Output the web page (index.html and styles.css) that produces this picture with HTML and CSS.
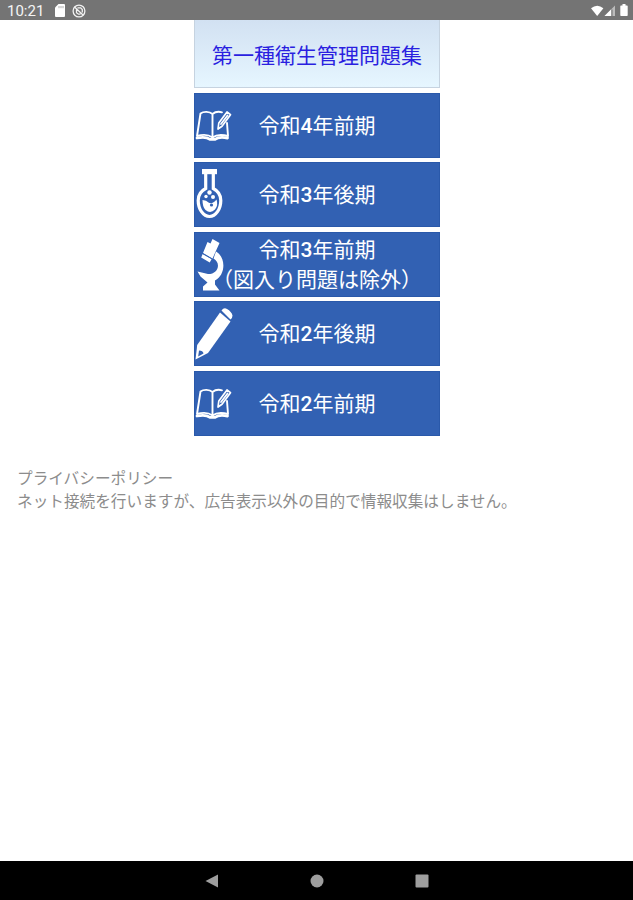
FILE: index.html
```html
<!DOCTYPE html>
<html lang="ja">
<head>
    <meta charset="UTF-8">
    <title>第一種衛生管理問題集</title>
    <link rel="stylesheet" href="styles.css">
</head>
<body>
<svg class="defs" width="0" height="0">
    <symbol id="book" viewBox="0 0 38 60">
        <g fill="none" stroke="#fff" stroke-linejoin="round" stroke-linecap="round">
            <path stroke-width="1.900" d="M17.500 19C14.500 16.200 8.500 16.200 5.500 18.500L2 41c5-1.500 11.500-1.500 15.500 1.500 4-3 10-3 15.500-1.500L32 28M17.500 19V42M17.500 19c3-2.500 6-2.700 9.500-1.700"/>
            <path stroke-width="2.800" d="M2 43c5-1 10-1 13 1.400h5c3-2.400 7-2.400 12.500-1.400"/>
            <path stroke-width="1.700" d="M23 34l.8-6L32 17l3.500 2.700-8.500 11.500zM26 29l6.500-8.500"/>
        </g>
    </symbol>
</svg>
<div class="status">
    <span class="time">10:21</span>
    <svg class="sd" width="10" height="13" viewBox="0 0 10 13"><path fill="#fff" d="M3.500 0H9q1 0 1 1v11q0 1-1 1H1q-1 0-1-1V3.500z"/><path stroke="#999" stroke-width=".8" d="M4 2v2.200M6 2v2.200M8 2v2.200"/></svg>
    <svg class="sync" width="14" height="14" viewBox="0 0 14 14"><g fill="none" stroke="#f2f2f2" stroke-width="1.300"><circle cx="7" cy="7" r="5.900"/><path d="M2.500 3l8.800 8.300M4.500 5.500v3.200l2 1.500h2M5.500 3.800h3.200l1.600 1.700v3"/></g></svg>
    <svg class="signals" width="38" height="14" viewBox="0 0 38 14">
        <path fill="#fff" d="M0 4.200Q6.200-.8 12.400 4.200L6.200 12z"/>
        <path fill="#bbb" d="M13.500 12L24 1.500V12z"/><path fill="#fff" d="M13.500 12L20 5.500V12z"/><path stroke="#747474" d="M21 5.500V12"/>
        <path fill="#fff" d="M31.500 0h3v1.500H36q.7 0 .7.700v9.100q0 .7-.7.700h-6q-.7 0-.7-.7V2.200q0-.7.700-.7h1.500z"/>
    </svg>
</div>
<div class="main">
    <h1 class="title">第一種衛生管理問題集</h1>
    <ul class="menu">
        <li><a href="#"><svg class="icon"><use href="#book"/></svg><span>令和<b>4</b>年前期</span></a></li>
        <li><a href="#">
            <svg class="icon" viewBox="0 0 38 60">
                <path fill="#fff" d="M7 5h15v5.200H7z"/>
                <path fill="none" stroke="#fff" stroke-width="3.200" d="M10.700 10v14.500C5.700 27 3.200 31.500 3.200 36.500c0 8.500 5 16 11.300 16s11.300-7.500 11.300-16c0-5-2.500-9.500-7.500-12V10"/>
                <path fill="#fff" d="M7.500 36q4 0 6 2.500 3.500 2.500 8-3 2 6-1.500 10-4.500 4.500-9.500.5-3-3-3-10z"/>
                <g fill="#fff"><circle cx="14.500" cy="28.500" r="2.200"/><circle cx="18" cy="33" r="2"/><circle cx="11" cy="32.500" r="1.700"/></g>
                <circle cx="16.500" cy="41" r="1.600" fill="#3261b3"/>
            </svg><span>令和<b>3</b>年後期</span></a></li>
        <li><a href="#">
            <svg class="icon" viewBox="0 0 38 60">
                <g fill="#fff">
                    <path d="M17.500 5l7 4-7 15.500-9.500-5.500 4.500-11 3 1.500z"/>
                    <path d="M7.700 20l9 5-2 3.500-8.500-5z"/>
                    <path d="M21 17.500C31 23 31 41 20 46.500v4l4.500 6H8v-4l4.500-4-7-6L2.500 37.500l10.500 2.500c11 0 13-11.500 5.500-15.500z"/>
                </g>
                <path stroke="#3261b3" stroke-width=".9" d="M7.500 19.500l9.500 5.500"/>
            </svg><span>令和<b>3</b>年前期<br>（図入り問題は除外）</span></a></li>
        <li><a href="#">
            <svg class="icon" viewBox="0 0 38 60">
                <g fill="#fff">
                    <path d="M25 9.500l10.500 9L13 50 .5 56.500 2.200 42z"/>
                    <path d="M26.500 7.500q2.500-3.500 5.500-1.500 4.500 2.500 5.500 6.500 0 2.500-2 4z"/>
                </g>
                <path fill="#3261b3" d="M4 47.500q4 0 4.500 3L3.200 53.500z"/>
            </svg><span>令和<b>2</b>年後期</span></a></li>
        <li><a href="#"><svg class="icon"><use href="#book"/></svg><span>令和<b>2</b>年前期</span></a></li>
    </ul>
</div>
<div class="policy">
    <p>プライバシーポリシー</p>
    <p>ネット接続を行いますが、広告表示以外の目的で情報収集はしません。</p>
</div>
<div class="nav">
    <svg width="14" height="14" viewBox="0 0 14 14"><path d="M.5 7L13 .5v13z"/></svg>
    <svg width="14" height="14" viewBox="0 0 14 14"><circle cx="7" cy="7" r="6.500"/></svg>
    <svg width="14" height="14" viewBox="0 0 14 14"><rect x=".5" y=".5" width="13" height="13" rx="1"/></svg>
</div>
</body>
</html>
```
FILE: styles.css
```css
@charset "UTF-8";
body,h1,ul,li,p{margin:0;padding:0}
ul{list-style:none}
a{text-decoration:none}
svg{display:block;flex:none}
.defs{position:absolute}

body{
    display:flex;
    flex-direction:column;
    height:900px;
    overflow:hidden;
    background:#fff;
    font-family:Roboto, "Noto Sans CJK JP", sans-serif;
}

/* status bar */
.status{
    display:flex;
    align-items:center;
    box-sizing:border-box;
    height:20px;
    padding:1px 4px 0 7px;
    background:#747474;
    color:#f4f4f4;
    font-size:15px;
}
.time{width:48px;}
.sync{margin-left:7px;}
.signals{margin-left:auto;}

/* title and menu */
.main{
    width:246px;
    margin-left:194px;
}
.title{
    box-sizing:border-box;
    height:68px;
    border:1px solid #c6d3e0;
    border-top:0;
    background:linear-gradient(#d2e1f2, #e6f6ff);
    color:#2a1fe0;
    font-size:21px;
    font-weight:400;
    line-height:72px;
    text-align:center;
}
.menu{
    display:flex;
    flex-direction:column;
    gap:4.600px;
    padding-top:4.600px;
}
.menu a{
    position:relative;
    display:flex;
    align-items:center;
    justify-content:center;
    box-sizing:border-box;
    height:65px;
    padding-top:1px;
    border:1px solid #2a59aa;
    background:#3261b3;
    color:#fff;
    font-size:21px;
    line-height:30px;
    text-align:center;
    white-space:nowrap;
}
.menu b{font-weight:500;}
.icon{
    position:absolute;
    left:0;
    top:1px;
    width:38px;
    height:60px;
}

.policy{
    flex:1;
    padding:31px 17px 0;
    color:#8c8c8c;
    font-size:15.650px;
    line-height:23px;
}

/* navigation bar */
.nav{
    display:flex;
    justify-content:center;
    gap:91px;
    box-sizing:border-box;
    height:39px;
    padding-top:13px;
    background:#000;
    fill:#9e9e9e;
}
```
